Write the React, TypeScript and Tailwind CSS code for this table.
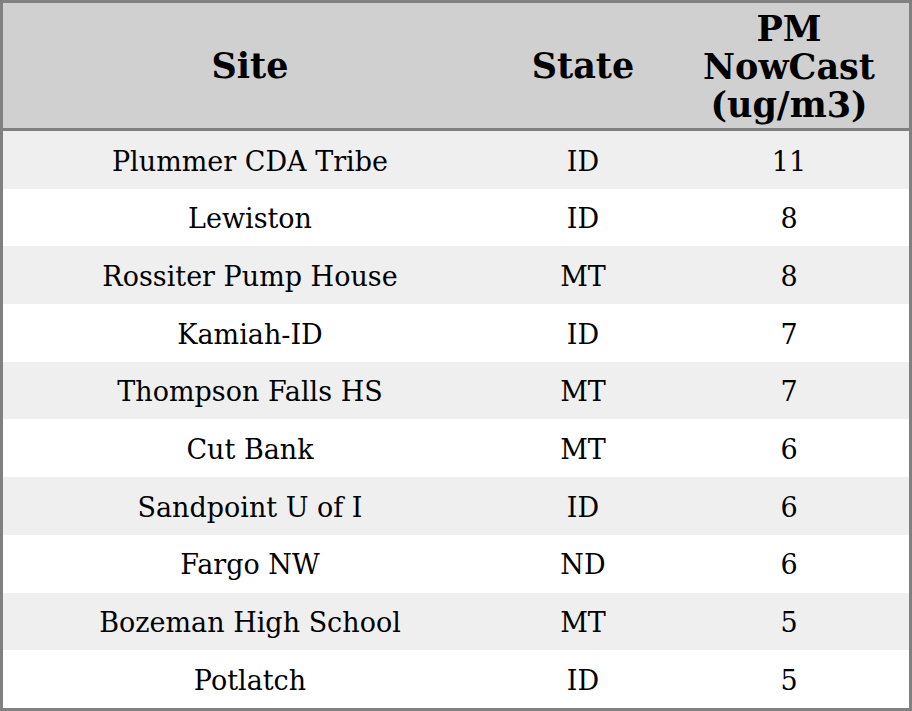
const rows: [string, string, string][] = [
  ['Plummer CDA Tribe', 'ID', '11'],
  ['Lewiston', 'ID', '8'],
  ['Rossiter Pump House', 'MT', '8'],
  ['Kamiah-ID', 'ID', '7'],
  ['Thompson Falls HS', 'MT', '7'],
  ['Cut Bank', 'MT', '6'],
  ['Sandpoint U of I', 'ID', '6'],
  ['Fargo NW', 'ND', '6'],
  ['Bozeman High School', 'MT', '5'],
  ['Potlatch', 'ID', '5'],
]

export default function App() {
  return (
    <div className="w-[912px] h-[711px] bg-white text-black font-['DejaVu_Serif',serif]">
      <div className="border-[3px] border-[#808080] w-[912px]">
        <div className="grid grid-cols-[494px_172px_240px] h-[125px] bg-[#d0d0d0] border-b-[3px] border-[#808080] box-content font-bold text-[35px] leading-[38px]">
          <div className="flex items-center justify-center">Site</div>
          <div className="flex items-center justify-center">State</div>
          <div className="flex items-center justify-center text-center pt-[2px]">
            PM
            <br />
            NowCast
            <br />
            (ug/m3)
          </div>
        </div>
        {rows.map(([site, state, pm], i) => (
          <div
            key={site}
            className={
              i % 2 === 0
                ? 'grid grid-cols-[494px_172px_240px] h-[57.7px] bg-[#efefef] text-[27px] pt-[4px]'
                : 'grid grid-cols-[494px_172px_240px] h-[57.7px] bg-white text-[27px] pt-[4px]'
            }
          >
            <div className="flex items-center justify-center">{site}</div>
            <div className="flex items-center justify-center">{state}</div>
            <div className="flex items-center justify-center">{pm}</div>
          </div>
        ))}
      </div>
    </div>
  )
}
